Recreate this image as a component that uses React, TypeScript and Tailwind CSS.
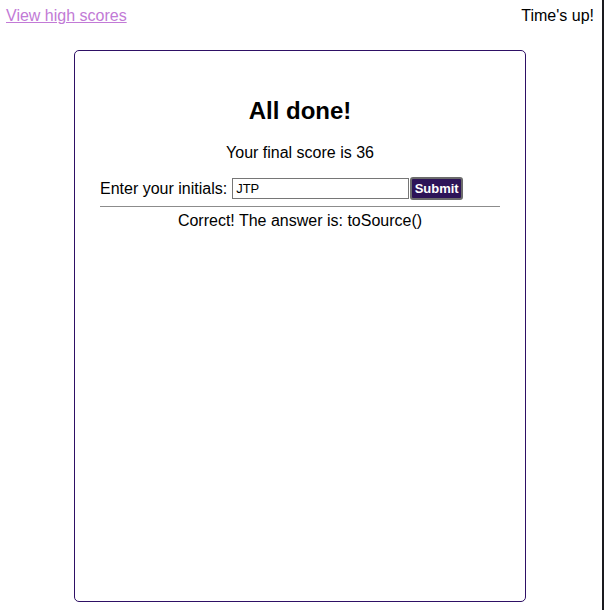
const App = () => {
  return (
    <div className="flex h-[610px] w-[604px] bg-white font-['Liberation_Sans',Arial,sans-serif] text-black">
      <div className="flex w-[602px] flex-col">
        {/* Top bar */}
        <header className="box-content flex h-[18px] items-start justify-between pl-[6px] pr-[8px] pt-[7px] text-[16px] leading-[18px]">
          <a href="#" className="text-[#c27ad6] underline">
            View high scores
          </a>
          <span>Time's up!</span>
        </header>

        {/* Quiz card */}
        <div className="ml-[74px] mt-[25px] h-[552px] w-[452px] rounded-[5px] border border-[#2e1065]">
          <div className="mx-auto flex w-[400px] flex-col pt-[46px]">
            <h2 className="text-center text-[24px] font-bold leading-[28px]">All done!</h2>
            <p className="mt-[19px] text-center text-[16px] leading-[18px]">Your final score is 36</p>
            <form
              className="mt-[15px] flex items-center text-[16px] leading-[18px]"
              onSubmit={(e) => e.preventDefault()}
            >
              <label htmlFor="initials" className="mr-[5px]">
                Enter your initials:
              </label>
              <input
                id="initials"
                defaultValue="JTP"
                className="h-[21px] w-[177px] border border-[#767676] px-[3px] text-[13px] leading-[15px] outline-none"
              />
              <button
                type="submit"
                className="ml-[1px] h-[23px] w-[53px] rounded-[3px] border-2 border-[#6b6b6b] bg-[#2d1458] text-[13px] font-bold leading-[15px] text-white"
              >
                Submit
              </button>
            </form>
            <hr className="mt-[6px] border-t border-[#8c8c8c]" />
            <p className="mt-[5px] text-center text-[16px] leading-[18px]">Correct! The answer is: toSource()</p>
          </div>
        </div>
      </div>
      <div className="h-[610px] w-[2px] bg-[#1a1a1f]" />
    </div>
  );
};

export default App;
